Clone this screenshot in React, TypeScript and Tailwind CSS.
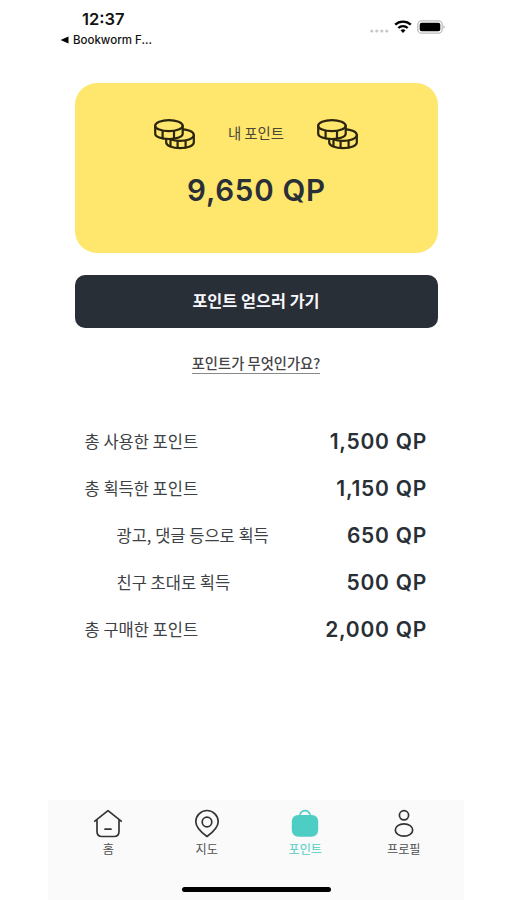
import type { ReactNode } from "react";

interface PointRow {
  label: string;
  value: string;
  nested?: boolean;
}

const rows: PointRow[] = [
  { label: "총 사용한 포인트", value: "1,500 QP" },
  { label: "총 획득한 포인트", value: "1,150 QP" },
  { label: "광고, 댓글 등으로 획득", value: "650 QP", nested: true },
  { label: "친구 초대로 획득", value: "500 QP", nested: true },
  { label: "총 구매한 포인트", value: "2,000 QP" },
];

function CoinsIcon() {
  return (
    <svg
      width="43"
      height="32"
      viewBox="0 0 43 32"
      fill="#ffe66d"
      stroke="#2b250d"
      strokeWidth="2.200"
      strokeLinecap="round"
      strokeLinejoin="round"
    >
      <path d="M13.200 17v7.500c0 3.200 6 5.700 13.900 5.700s13.700-2.700 13.700-5.700V17" />
      <ellipse cx="27" cy="17" rx="13.800" ry="5.900" />
      <path d="M17.500 21.800v6M24.600 23.200v6.600M32.600 22.700v6.800" />
      <path d="M2.200 7.700v8c0 3 6 5.300 13.800 5.300s13.700-2.300 13.700-5.300v-8" />
      <ellipse cx="15.900" cy="7.700" rx="13.700" ry="5.500" />
      <path d="M9.600 13v7M21 13v7" />
    </svg>
  );
}

function StatusBar() {
  return (
    <div className="flex h-[83px] justify-between font-['Inter',sans-serif] text-[#111]">
      <div className="pl-3 pt-[9px]">
        <div className="pl-[22px] text-[16.5px] leading-5 font-semibold">12:37</div>
        <div className="mt-[5px] flex items-center gap-1 text-[11.5px] leading-3 font-medium">
          <svg width="9" height="8" viewBox="0 0 9 8">
            <path d="M0.500 4 8.500 0.500v7z" />
          </svg>
          Bookworm F...
        </div>
      </div>
      <div className="mt-[19px] flex h-4 items-center pr-[18px]">
        <svg width="20" height="16" viewBox="0 0 20 16" fill="#c9c9c9">
          <circle cx="2.800" cy="12" r="1.600" />
          <circle cx="7.800" cy="12" r="1.600" />
          <circle cx="12.800" cy="12" r="1.600" />
          <circle cx="17.800" cy="12" r="1.600" />
        </svg>
        <svg className="ml-[5px]" width="18" height="16" viewBox="0 0 18 16" fill="none" stroke="#000" strokeWidth="2.300">
          <path d="M1.200 5.700a11.200 11.200 0 0 1 15.600 0M4.300 9a6.800 6.800 0 0 1 9.400 0" />
          <path d="M6.500 11.300a3.700 3.700 0 0 1 5 0L9 14z" fill="#000" stroke="none" />
        </svg>
        <svg className="ml-[5px]" width="29" height="16" viewBox="0 0 29 16">
          <rect x="0.800" y="1.800" width="24.400" height="12.400" rx="3.800" fill="#fff" stroke="#bdbdbd" strokeWidth="1.300" />
          <rect x="2.700" y="3.700" width="20.600" height="8.600" rx="2" />
          <path d="M26.500 6.200v3.600c1.600-.6 1.600-3 0-3.600z" fill="#a8a8a8" />
        </svg>
      </div>
    </div>
  );
}

function HomeIcon() {
  return (
    <svg width="30" height="30" viewBox="0 0 30 30" fill="none" stroke="#343434" strokeWidth="1.700" strokeLinecap="round" strokeLinejoin="round">
      <path d="M1.800 12.200 15 1.700l13.200 10.500M4 11v11.500c0 3.500 1.500 5 5 5h12c3.500 0 5-1.500 5-5V11M12 20.200h6" />
    </svg>
  );
}

function MapIcon() {
  return (
    <svg width="30" height="30" viewBox="0 0 30 30" fill="none" stroke="#343434" strokeWidth="1.700" strokeLinejoin="round">
      <path d="M15 27.500C9.500 23.500 3.800 19 3.800 12.700a11.200 11.200 0 0 1 22.400 0C26.200 19 20.500 23.500 15 27.500z" />
      <circle cx="15" cy="13" r="4.800" />
    </svg>
  );
}

function BagIcon() {
  return (
    <svg width="30" height="30" viewBox="0 0 30 30" fill="#4ecdc4">
      <path d="M9.500 7.500C10 4 12 1.700 15 1.700S20 4 20.500 7.500" fill="none" stroke="#4ecdc4" strokeWidth="1.700" />
      <path d="M8.500 6h13c4.500 0 6.700 3 6.700 7v7.500c0 4.500-2.500 7.200-7 7.200H8.800c-4.500 0-7-2.700-7-7.200V13c0-4 2.200-7 6.700-7z" />
    </svg>
  );
}

function ProfileIcon() {
  return (
    <svg width="30" height="30" viewBox="0 0 30 30" fill="none" stroke="#343434" strokeWidth="1.700">
      <circle cx="15" cy="6.300" r="4.600" />
      <ellipse cx="15" cy="21" rx="8.700" ry="6.200" />
    </svg>
  );
}

function Tab({ icon, label, active }: { icon: ReactNode; label: string; active?: boolean }) {
  return (
    <div className={`flex flex-1 flex-col items-center ${active ? "text-[#4ecdc4]" : "text-[#505050]"}`}>
      {icon}
      <span className="mt-0.5 text-[12.200px] leading-4">{label}</span>
    </div>
  );
}

export default function App() {
  return (
    <div className="h-[900px] w-[507px] overflow-hidden bg-white font-['Noto_Sans_CJK_KR',sans-serif]">
      <div className="ml-12 flex h-full w-[416px] flex-col">
        <StatusBar />

        <main className="flex flex-1 flex-col items-center px-[26.500px]">
          <section className="flex h-[170px] w-full flex-col items-center rounded-[22px] bg-[#ffe66d] pt-[35px]">
            <div className="flex h-8 items-center">
              <CoinsIcon />
              <span className="w-[120px] pb-0.5 text-center text-[14.400px] leading-5 text-[#4b4636]">내 포인트</span>
              <CoinsIcon />
            </div>
            <p className="mt-5 pl-px font-['Inter',sans-serif] text-[29.500px] leading-10 font-semibold tracking-[0.750px] text-[#292f36]">
              9,650 QP
            </p>
          </section>

          <button className="mt-[22px] h-[53px] w-full rounded-[10px] bg-[#292f36] pb-0.5 text-[16.300px] font-bold text-[#f7f7fb]">
            포인트 얻으러 가기
          </button>

          <a className="mt-[25px] border-b border-[#888] pb-px text-[14.300px] leading-[19px] font-medium text-[#444]">
            포인트가 무엇인가요?
          </a>

          <ul className="mt-[44px] flex w-full flex-col pr-[10.500px] pl-2.5">
            {rows.map((row) => (
              <li key={row.label} className="flex h-[47px] items-center justify-between">
                <span className={`pb-px text-[16.500px] text-[#3d4145] ${row.nested ? "pl-8" : ""}`}>{row.label}</span>
                <span className="pt-px font-['Inter',sans-serif] text-[21px] font-semibold tracking-[0.750px] text-[#292f36]">
                  {row.value}
                </span>
              </li>
            ))}
          </ul>
        </main>

        <nav className="flex h-[100px] flex-col items-center bg-[#fafafa]">
          <div className="flex w-full flex-1 px-[11px] pt-[9px]">
            <Tab icon={<HomeIcon />} label="홈" />
            <Tab icon={<MapIcon />} label="지도" />
            <Tab icon={<BagIcon />} label="포인트" active />
            <Tab icon={<ProfileIcon />} label="프로필" />
          </div>
          <div className="mb-2 h-[5px] w-[149px] rounded-full bg-black" />
        </nav>
      </div>
    </div>
  );
}
